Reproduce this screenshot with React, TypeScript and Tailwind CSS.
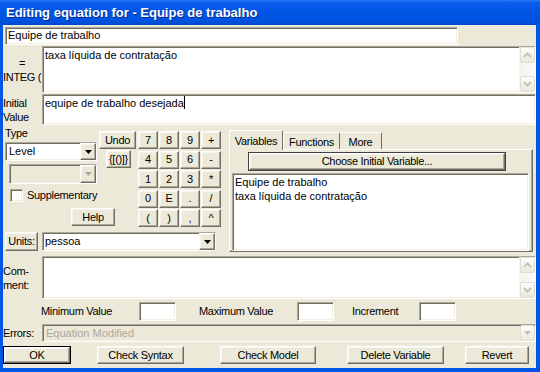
import { FunctionComponent, ReactNode } from "react";

const sunken = "border border-t-[#ACA899] border-l-[#ACA899] border-r-white border-b-white shadow-[inset_1px_1px_0_#716F64,inset_-1px_-1px_0_#F1EFE2]";
const raised = "border border-t-white border-l-white border-r-[#716F64] border-b-[#716F64] shadow-[inset_-1px_-1px_0_#ACA899,inset_1px_1px_0_#F5F4EE] bg-[#ECE9D8]";
const label = "tracking-[-0.3px] text-black";

const Btn: FunctionComponent<{ className?: string; children: ReactNode }> = ({ className = "", children }) => (
    <div className={`${raised} flex items-center justify-center ${label} leading-none ${className}`}>{children}</div>
);

const Tri: FunctionComponent<{ color?: string }> = ({ color = "#000" }) => (
    <svg width="7" height="4" viewBox="0 0 7 4"><polygon points="0,0 7,0 3.5,4" fill={color} /></svg>
);

const DropBtn: FunctionComponent<{ disabled?: boolean }> = ({ disabled }) => (
    <div className={`${raised} w-[16px] h-full flex items-center justify-center`}>
        <Tri color={disabled ? "#ACA899" : "#000"} />
    </div>
);

const XpBtn: FunctionComponent<{ dir: "up" | "down" | "drop" }> = ({ dir }) => (
    <div className="w-[15px] h-[16px] rounded-[2px] border border-[#E0DED3] bg-[linear-gradient(to_bottom,#FDFDFB,#EAE8DE)] flex items-center justify-center">
        {dir === "drop" ? (
            <Tri color="#C2BFB2" />
        ) : (
            <svg width="9" height="6" viewBox="0 0 9 6">
                <polyline
                    points={dir === "up" ? "1,5 4.5,1.5 8,5" : "1,1 4.5,4.5 8,1"}
                    fill="none"
                    stroke="#C6C3B6"
                    strokeWidth="2"
                />
            </svg>
        )}
    </div>
);

const ScrollCol: FunctionComponent = () => (
    <div className="w-[16px] h-full flex flex-col justify-between items-end py-[0px] bg-[linear-gradient(to_right,#F3F2EC,#FBFBF9)]">
        <XpBtn dir="up" />
        <XpBtn dir="down" />
    </div>
);

const keys = ["7", "8", "9", "+", "4", "5", "6", "-", "1", "2", "3", "*", "0", "E", ".", "/", "(", ")", ",", "^"];

export default function App() {
    return (
        <div className="w-[540px] h-[372px] flex flex-col bg-[#0055E6] font-['Liberation_Sans',Arial,sans-serif] text-[11px] text-black">
            {/* title bar */}
            <div className="h-[25px] shrink-0 flex items-center pl-[6px] bg-[linear-gradient(to_bottom,#2A7BF5_0%,#0A5EEC_10%,#0055E5_45%,#0053E0_85%,#0048CC_100%)]">
                <span className="text-white font-bold text-[13px] [text-shadow:1px_1px_0_#0A2A8A]">
                    Editing equation for - Equipe de trabalho
                </span>
            </div>

            {/* client area */}
            <div className="flex-1 ml-[3px] mr-[4px] mb-[4px] bg-[#ECE9D8] flex flex-col">
                {/* name */}
                <div className={`mt-[2px] ml-[2px] w-[453px] h-[18px] bg-white ${sunken} pl-[2px] leading-[15px]`}>
                    Equipe de trabalho
                </div>

                {/* equation */}
                <div className="mt-[1px] h-[47px] flex">
                    <div className="w-[39px] flex items-center">
                        <div className={`flex flex-col items-center leading-[14px] ${label}`}>
                            <span>=</span>
                            <span>INTEG (</span>
                        </div>
                    </div>
                    <div className={`flex-1 bg-white ${sunken} flex`}>
                        <div className="flex-1 pl-[2px] pt-[1px] leading-[14px]">taxa líquida de contratação</div>
                        <ScrollCol />
                    </div>
                </div>

                {/* initial value */}
                <div className="mt-[1px] h-[31px] flex">
                    <div className={`w-[39px] flex flex-col justify-center leading-[14px] ${label}`}>
                        <span>Initial</span>
                        <span>Value</span>
                    </div>
                    <div className={`flex-1 bg-white ${sunken} pl-[2px] pt-[1px] leading-[14px]`}>
                        equipe de trabalho desejada<span className="inline-block w-px h-[13px] bg-black align-[-2px]" />
                    </div>
                </div>

                {/* middle */}
                <div className="mt-[1px] h-[126px] flex">
                    <div className="w-[224px] flex flex-col">
                        <div className="h-[102px] flex">
                            <div className="w-[134px] flex flex-col">
                                <div className="flex">
                                    <div className="w-[96px] pl-[2px] flex flex-col">
                                        <span className={`h-[14px] leading-[14px] ${label}`}>Type</span>
                                        <div className={`mt-[2px] w-[92px] h-[19px] bg-white ${sunken} flex`}>
                                            <span className="flex-1 pl-[3px] leading-[16px]">Level</span>
                                            <DropBtn />
                                        </div>
                                        <div className={`mt-[3px] ml-[4px] w-[88px] h-[20px] bg-[#ECE9D8] ${sunken} flex`}>
                                            <span className="flex-1" />
                                            <DropBtn disabled />
                                        </div>
                                        <div className="mt-[5px] ml-[5px] flex items-center h-[13px]">
                                            <div className={`w-[13px] h-[13px] bg-white ${sunken}`} />
                                            <span className={`ml-[4px] ${label}`}>Supplementary</span>
                                        </div>
                                    </div>
                                    <div className="flex flex-col pt-[5px]">
                                        <Btn className="w-[37px] h-[18px]">Undo</Btn>
                                        <Btn className="mt-[1px] ml-[7px] w-[25px] h-[18px]">{"{[()]}"}</Btn>
                                    </div>
                                </div>
                                <Btn className="mt-[6px] ml-[68px] w-[44px] h-[18px]">Help</Btn>
                            </div>
                            <div className="ml-[1px] mt-[5px] grid grid-cols-[repeat(4,20px)] auto-rows-[18px] gap-x-[1px] gap-y-[1.5px] h-fit">
                                {keys.map((k) => (
                                    <Btn key={k}>{k}</Btn>
                                ))}
                            </div>
                        </div>
                        <div className="mt-[4px] h-[19px] flex">
                            <Btn className="ml-[2px] w-[33px]">Units:</Btn>
                            <div className={`ml-[4px] w-[174px] bg-white ${sunken} flex`}>
                                <span className="flex-1 pl-[2px] leading-[16px]">pessoa</span>
                                <DropBtn />
                            </div>
                        </div>
                    </div>

                    {/* tabs */}
                    <div className="ml-[2px] mr-[3px] flex-1 flex flex-col">
                        <div className="pt-[3px] h-[23px] flex items-end">
                            <div className={`relative z-10 -mb-px h-[20px] w-[54px] border border-t-white border-l-white border-r-[#716F64] border-b-0 bg-[#ECE9D8] rounded-t-[2px] flex items-start justify-center pt-[2px] ${label}`}>
                                Variables
                            </div>
                            <div className={`h-[17px] w-[57px] border border-t-white border-l-white border-r-[#716F64] border-b-0 rounded-t-[2px] flex items-start justify-center pt-[1px] ${label}`}>
                                Functions
                            </div>
                            <div className={`h-[17px] w-[42px] border border-t-white border-l-0 border-r-[#716F64] border-b-0 rounded-t-[2px] flex items-start justify-center pt-[1px] ${label}`}>
                                More
                            </div>
                        </div>
                        <div className="flex-1 border border-t-white border-l-white border-r-[#716F64] border-b-[#716F64] shadow-[inset_-1px_-1px_0_#ACA899] flex flex-col">
                            <Btn className="mt-[3px] ml-[19px] w-[256px] h-[17px] outline outline-1 outline-[#404040]">Choose Initial Variable...</Btn>
                            <div className={`mt-[3px] ml-[2px] mr-[3px] h-[78px] bg-white ${sunken} pl-[2px] pt-[1px] leading-[14px]`}>
                                <div>Equipe de trabalho</div>
                                <div>taxa líquida de contratação</div>
                            </div>
                        </div>
                    </div>
                </div>

                {/* comment */}
                <div className="mt-[4px] h-[43px] flex">
                    <div className={`w-[39px] flex flex-col justify-center leading-[14px] ${label}`}>
                        <span>Com-</span>
                        <span>ment:</span>
                    </div>
                    <div className={`flex-1 bg-white ${sunken} flex`}>
                        <div className="flex-1" />
                        <ScrollCol />
                    </div>
                </div>

                {/* min / max / increment */}
                <div className="mt-[3px] h-[19px] flex items-center">
                    <span className={`ml-[38px] w-[98px] ${label}`}>Minimum Value</span>
                    <div className={`w-[37px] h-[19px] bg-white ${sunken}`} />
                    <span className={`ml-[23px] w-[98px] ${label}`}>Maximum Value</span>
                    <div className={`w-[37px] h-[19px] bg-white ${sunken}`} />
                    <span className={`ml-[18px] w-[67px] ${label}`}>Increment</span>
                    <div className={`w-[37px] h-[19px] bg-white ${sunken}`} />
                </div>

                {/* errors */}
                <div className="mt-[3px] h-[18px] flex">
                    <span className={`w-[39px] leading-[18px] ${label}`}>Errors:</span>
                    <div className={`flex-1 bg-[#ECE9D8] ${sunken} flex items-center`}>
                        <span className="flex-1 pl-[3px] text-[#ACA899]">Equation Modified</span>
                        <XpBtn dir="drop" />
                    </div>
                </div>

                {/* buttons */}
                <div className="mt-[4px] h-[18px] flex">
                    <div className="w-[68px] border border-black flex">
                        <Btn className="flex-1">OK</Btn>
                    </div>
                    <Btn className="ml-[26px] w-[87px]">Check Syntax</Btn>
                    <Btn className="ml-[36px] w-[96px]">Check Model</Btn>
                    <Btn className="ml-[31px] w-[97px]">Delete Variable</Btn>
                    <Btn className="ml-[21px] w-[64px]">Revert</Btn>
                </div>
            </div>
        </div>
    );
}
